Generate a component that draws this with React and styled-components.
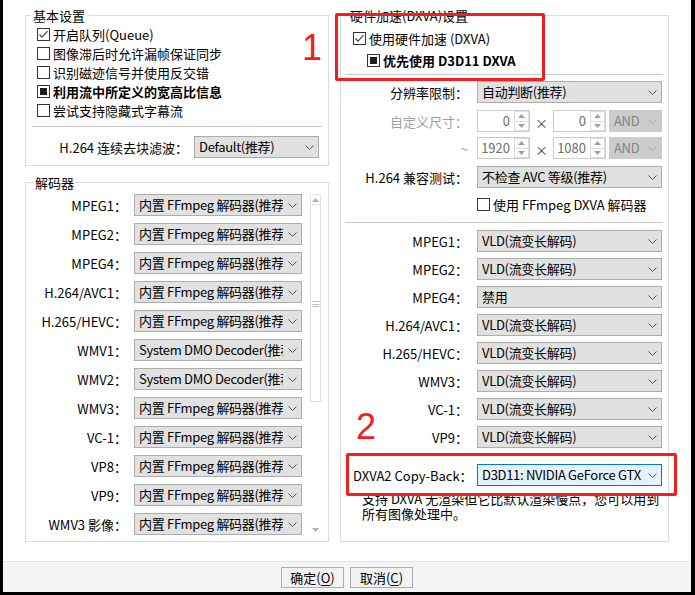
import React from "react";
import styled, { createGlobalStyle } from "styled-components";

const GlobalStyle = createGlobalStyle`
  html, body {
    margin: 0;
    padding: 0;
    background: #000;
  }
  body {
    font-family: "Noto Sans CJK SC", "Noto Sans", sans-serif;
    font-size: 13px;
    color: #000;
  }
  * {
    box-sizing: border-box;
  }
`;

const ffmpeg = "内置 FFmpeg 解码器(推荐)";
const dmo = "System DMO Decoder(推荐)";
const vld = "VLD(流变长解码)";

const decoders = [
  ["MPEG1", ffmpeg],
  ["MPEG2", ffmpeg],
  ["MPEG4", ffmpeg],
  ["H.264/AVC1", ffmpeg],
  ["H.265/HEVC", ffmpeg],
  ["WMV1", dmo],
  ["WMV2", dmo],
  ["WMV3", ffmpeg],
  ["VC-1", ffmpeg],
  ["VP8", ffmpeg],
  ["VP9", ffmpeg],
  ["WMV3 影像", ffmpeg],
];

const dxvaModes = [
  ["MPEG1", vld],
  ["MPEG2", vld],
  ["MPEG4", "禁用"],
  ["H.264/AVC1", vld],
  ["H.265/HEVC", vld],
  ["WMV3", vld],
  ["VC-1", vld],
  ["VP9", vld],
];

const Chevron = ({ color = "#555" }) => (
  <svg width="9" height="5" viewBox="0 0 9 5">
    <polyline points="0.5,0.5 4.5,4.5 8.5,0.5" fill="none" stroke={color} strokeWidth="1" />
  </svg>
);

const Tri = ({ up, color = "#9a9a9a" }) => (
  <svg width="7" height="4" viewBox="0 0 7 4">
    <polygon points={up ? "0,4 3.5,0 7,4" : "0,0 3.5,4 7,0"} fill={color} />
  </svg>
);

const Checkbox = ({ state, children, bold, indent, h, mt }) => (
  <CheckRow $bold={bold} $indent={indent} $h={h} $mt={mt}>
    <Box>
      {state === "checked" && (
        <svg width="11" height="11" viewBox="0 0 11 11">
          <polyline points="1.5,5.5 4,8.2 9.6,2.2" fill="none" stroke="#444" strokeWidth="1.2" />
        </svg>
      )}
      {state === "mixed" && <Fill />}
    </Box>
    <span>{children}</span>
  </CheckRow>
);

const Select = ({ value, w, focus, disabled, ml }) => (
  <SelectBox $w={w} $focus={focus} $disabled={disabled} $ml={ml}>
    <SelectText>{value}</SelectText>
    <ChevronCell>
      <Chevron color={disabled ? "#a8a8a8" : "#555"} />
    </ChevronCell>
  </SelectBox>
);

const Spin = ({ value }) => (
  <SpinBox>
    <SpinValue>{value}</SpinValue>
    <SpinButtons>
      <SpinButton>
        <Tri up color="#a0a0a0" />
      </SpinButton>
      <SpinButton>
        <Tri color="#a0a0a0" />
      </SpinButton>
    </SpinButtons>
  </SpinBox>
);

const SizeRow = ({ label, a, b, mt }) => (
  <FormRow $gap={0} $mt={mt}>
    <Label $w={115} $muted $mr={9}>
      {label}
    </Label>
    <Spin value={a} />
    <Times>×</Times>
    <Spin value={b} />
    <Select value="AND" w={53} ml={3} disabled />
  </FormRow>
);

export default function App() {
  return (
    <Screen>
      <GlobalStyle />
      <Dialog>
        <Body>
          <Column $w={304}>
            <Group $pad="1px 6px 7px 11px">
              <Legend>基本设置</Legend>
              <Checkbox state="checked">开启队列(Queue)</Checkbox>
              <Checkbox>图像滞后时允许漏帧保证同步</Checkbox>
              <Checkbox>识别磁迹信号并使用反交错</Checkbox>
              <Checkbox state="mixed" bold>
                利用流中所定义的宽高比信息
              </Checkbox>
              <Checkbox>尝试支持隐藏式字幕流</Checkbox>
              <Separator $left={-5} $top={6} $bottom={9} />
              <InlineRow>
                <span>H.264 连续去块滤波：</span>
                <Select value="Default(推荐)" w={125} />
              </InlineRow>
            </Group>

            <Group $pad="3px 7px 6px 0" $mt={8} $grow>
              <Legend $offset={7}>解码器</Legend>
              <ListArea>
                <DecoderList>
                  {decoders.map(([name, value]) => (
                    <FormRow key={name} $gap={7}>
                      <Label $w={101}>{name}：</Label>
                      <Select value={value} w={168} />
                    </FormRow>
                  ))}
                </DecoderList>
                <ScrollBar>
                  <ScrollArrow>
                    <Tri up color="#b0b0b0" />
                  </ScrollArrow>
                  <ScrollThumb>≡</ScrollThumb>
                  <ScrollTrack />
                  <ScrollArrow $plain>
                    <Tri color="#b0b0b0" />
                  </ScrollArrow>
                </ScrollBar>
              </ListArea>
            </Group>
          </Column>

          <Column $w={329}>
            <Group $pad="3px 5px 6px 12px" $grow>
              <Legend $offset={-5}>硬件加速(DXVA)设置</Legend>
              <Checkbox state="checked" h={22}>
                使用硬件加速 (DXVA)
              </Checkbox>
              <Checkbox state="mixed" bold indent={14} h={22}>
                优先使用 D3D11 DXVA
              </Checkbox>
              <Separator $left={-8} $top={3} $bottom={6} />

              <FormRow $gap={9}>
                <Label $w={115}>分辨率限制：</Label>
                <Select value="自动判断(推荐)" w={185} />
              </FormRow>
              <SizeRow label="自定义尺寸：" a="0" b="0" mt={7} />
              <SizeRow label="~" a="1920" b="1080" mt={5} />
              <FormRow $gap={9} $mt={7}>
                <Label $w={115}>H.264 兼容测试：</Label>
                <Select value="不检查 AVC 等级(推荐)" w={185} />
              </FormRow>
              <Checkbox indent={124} h={22} mt={5}>
                使用 FFmpeg DXVA 解码器
              </Checkbox>
              <Separator $left={-8} $top={7} $bottom={7} />

              <ModeList>
                {dxvaModes.map(([name, value]) => (
                  <FormRow key={name} $gap={9}>
                    <Label $w={115}>{name}：</Label>
                    <Select value={value} w={185} />
                  </FormRow>
                ))}
              </ModeList>
              <Separator $left={-8} $top={7} $bottom={8} />

              <FormRow $gap={9}>
                <Label $w={115}>DXVA2 Copy-Back：</Label>
                <Select value="D3D11: NVIDIA GeForce GTX 1660 SUPER" w={185} focus />
              </FormRow>
              <Note>
                支持 DXVA 无渲染但它比默认渲染慢点，您可以用到
                <br />
                所有图像处理中。
              </Note>
            </Group>
          </Column>
        </Body>

        <Footer>
          <Button>
            确定(<u>O</u>)
          </Button>
          <Button>
            取消(<u>C</u>)
          </Button>
        </Footer>
      </Dialog>

      <Mark $x={335} $y={13} $w={210} $h={68} />
      <Mark $x={346} $y={453} $w={331} $h={43} />
      <Digit $x={302} $y={30}>1</Digit>
      <Digit $x={356} $y={409}>2</Digit>
    </Screen>
  );
}

const Screen = styled.div`
  position: relative;
  width: 695px;
  height: 595px;
  background: #000;
  padding-left: 3px;
  overflow: hidden;
`;

const Dialog = styled.div`
  width: 688px;
  height: 591px;
  background: #fff;
  display: flex;
  flex-direction: column;
`;

const Body = styled.div`
  flex: 1;
  display: flex;
  gap: 11px;
  padding: 0 22px 19px 22px;
`;

const Column = styled.div`
  width: ${({ $w }) => $w}px;
  display: flex;
  flex-direction: column;
`;

const Group = styled.fieldset`
  margin: ${({ $mt }) => $mt ?? 7}px 0 0 0;
  padding: ${({ $pad }) => $pad};
  border: 1px solid #dcdcdc;
  min-width: 0;
  display: flex;
  flex-direction: column;
  ${({ $grow }) => $grow && "flex: 1;"}
`;

const Legend = styled.legend`
  padding: 0 2px;
  margin-left: ${({ $offset }) => $offset ?? -6}px;
  line-height: 17px;
  font-size: 13px;
`;

const CheckRow = styled.div`
  display: flex;
  align-items: center;
  gap: 3px;
  height: ${({ $h }) => $h || 19}px;
  flex: none;
  margin-top: ${({ $mt }) => $mt || 0}px;
  padding-left: ${({ $indent }) => $indent || 0}px;
  font-weight: ${({ $bold }) => ($bold ? 700 : 400)};
  white-space: nowrap;
`;

const Box = styled.span`
  width: 13px;
  height: 13px;
  flex: none;
  border: 1px solid #333;
  background: #fff;
  display: flex;
  align-items: center;
  justify-content: center;
`;

const Fill = styled.span`
  width: 7px;
  height: 7px;
  background: #1e1e1e;
`;

const Separator = styled.div`
  height: 1px;
  flex: none;
  background: #c8c8c8;
  margin: ${({ $top }) => $top}px 0 ${({ $bottom }) => $bottom}px ${({ $left }) => $left}px;
`;

const InlineRow = styled.div`
  display: flex;
  align-items: center;
  justify-content: flex-end;
  gap: 6px;
  padding-right: 3px;
  white-space: nowrap;
`;

const FormRow = styled.div`
  display: flex;
  align-items: center;
  gap: ${({ $gap }) => $gap}px;
  height: 22px;
  margin-top: ${({ $mt }) => $mt || 0}px;
  flex: none;
`;

const Label = styled.span`
  width: ${({ $w }) => $w}px;
  flex: none;
  margin-right: ${({ $mr }) => $mr || 0}px;
  text-align: right;
  white-space: nowrap;
  color: ${({ $muted }) => ($muted ? "#a0a0a0" : "#000")};
`;

const SelectBox = styled.div`
  width: ${({ $w }) => $w}px;
  height: 22px;
  flex: none;
  margin-left: ${({ $ml }) => $ml || 0}px;
  display: flex;
  align-items: center;
  padding-left: 4px;
  border: 1px solid
    ${({ $focus, $disabled }) => ($focus ? "#0078d7" : $disabled ? "#cccccc" : "#adadad")};
  background: ${({ $focus, $disabled }) => ($focus ? "#e5f1fb" : $disabled ? "#cccccc" : "#e1e1e1")};
  color: ${({ $disabled }) => ($disabled ? "#838383" : "#000")};
`;

const SelectText = styled.span`
  flex: 1;
  min-width: 0;
  overflow: hidden;
  white-space: nowrap;
  line-height: 20px;
  letter-spacing: -0.3px;
`;

const ChevronCell = styled.span`
  width: 18px;
  flex: none;
  display: flex;
  align-items: center;
  justify-content: center;
`;

const SpinBox = styled.div`
  width: 53px;
  height: 22px;
  flex: none;
  display: flex;
  border: 1px solid #cccccc;
  background: #fff;
`;

const SpinValue = styled.span`
  flex: 1;
  text-align: right;
  padding-right: 4px;
  line-height: 20px;
  color: #6d6d6d;
`;

const SpinButtons = styled.div`
  width: 15px;
  display: flex;
  flex-direction: column;
`;

const SpinButton = styled.div`
  flex: 1;
  display: flex;
  align-items: center;
  justify-content: center;
  border: 1px solid #dcdcdc;
  & + & {
    border-top: none;
  }
`;

const Times = styled.span`
  width: 23px;
  flex: none;
  text-align: center;
  color: #444;
  padding-top: 3px;
`;

const ListArea = styled.div`
  display: flex;
  gap: 7px;
  align-items: flex-start;
`;

const DecoderList = styled.div`
  flex: 1;
  height: 341px;
  overflow: hidden;
  display: flex;
  flex-direction: column;
  gap: 7px;
`;

const ScrollBar = styled.div`
  width: 11px;
  height: 341px;
  display: flex;
  flex-direction: column;
`;

const ScrollArrow = styled.div`
  height: 11px;
  flex: none;
  display: flex;
  align-items: center;
  justify-content: center;
  border: 1px solid ${({ $plain }) => ($plain ? "transparent" : "#e6e6e6")};
`;

const ScrollThumb = styled.div`
  height: 197px;
  flex: none;
  border: 1px solid #dcdcdc;
  border-top: none;
  display: flex;
  align-items: center;
  justify-content: center;
  color: #b0b0b0;
  font-size: 10px;
`;

const ScrollTrack = styled.div`
  flex: 1;
`;

const ModeList = styled.div`
  display: flex;
  flex-direction: column;
  gap: 6px;
`;

const Note = styled.p`
  margin: 5px 0 0 9px;
  line-height: 15px;
  white-space: nowrap;
`;

const Footer = styled.div`
  height: 31px;
  flex: none;
  border-top: 1px solid #e3e3e3;
  background: #f5f5f5;
  display: flex;
  justify-content: center;
  align-items: flex-start;
  gap: 6px;
  padding: 5px 0 0 0;
`;

const Button = styled.button`
  width: 63px;
  height: 21px;
  padding: 0;
  border: 1px solid #adadad;
  background: #f2f2f2;
  font-family: inherit;
  font-size: 13px;
  line-height: 19px;
  color: #000;
  u {
    text-underline-offset: 2px;
  }
`;

const Mark = styled.div`
  position: absolute;
  left: ${({ $x }) => $x}px;
  top: ${({ $y }) => $y}px;
  width: ${({ $w }) => $w}px;
  height: ${({ $h }) => $h}px;
  border: 3px solid #f01e1e;
  border-radius: 2px;
  pointer-events: none;
`;

const Digit = styled.span`
  position: absolute;
  left: ${({ $x }) => $x}px;
  top: ${({ $y }) => $y}px;
  font-family: "Liberation Sans", Arial, sans-serif;
  font-size: 36px;
  line-height: 36px;
  color: #f01e1e;
`;
